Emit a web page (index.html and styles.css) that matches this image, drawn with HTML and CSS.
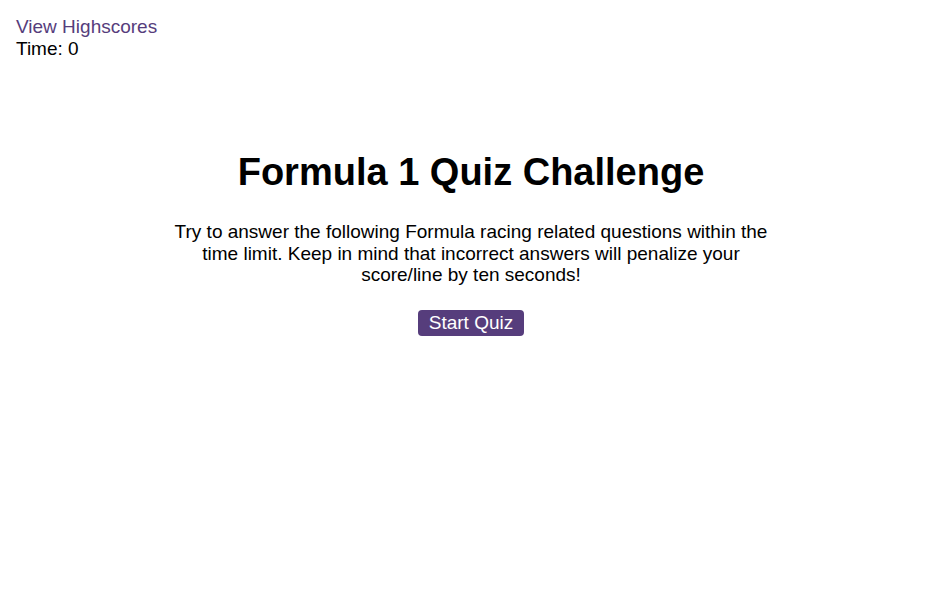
FILE: index.html
```html
<!DOCTYPE html>
<html>
<head>
<meta charset="utf-8">
<link rel="stylesheet" href="styles.css">
</head>
<body>
<header class="top">
  <a class="highscores" href="#">View Highscores</a>
  <div class="timer">Time: <span>0</span></div>
</header>
<main class="intro">
  <h1 class="title">Formula 1 Quiz Challenge</h1>
  <p class="desc">Try to answer the following Formula racing related questions within the time limit. Keep in mind that incorrect answers will penalize your score/line by ten seconds!</p>
  <button class="start">Start Quiz</button>
</main>
</body>
</html>
```
FILE: styles.css
```css
html, body {
  margin: 0;
  padding: 0;
  background: #fff;
}
body {
  font-family: "Liberation Sans", Arial, sans-serif;
  font-size: 19px;
  color: #000;
  padding: 16px;
}
.top {
  display: flex;
  flex-direction: column;
  align-items: flex-start;
  line-height: 22px;
}
.highscores {
  color: #563d7c;
  text-decoration: none;
}
.intro {
  display: flex;
  flex-direction: column;
  align-items: center;
  text-align: center;
  margin-top: 91px;
}
.title {
  font-size: 38px;
  font-weight: bold;
  margin: 0 0 27px;
}
.desc {
  max-width: 606px;
  margin: 0 0 24px;
  line-height: 21.5px;
}
.start {
  font-family: inherit;
  font-size: 19px;
  color: #fff;
  background: #563d7c;
  border: none;
  border-radius: 4px;
  padding: 0 11px;
  height: 26px;
  cursor: pointer;
}
```
